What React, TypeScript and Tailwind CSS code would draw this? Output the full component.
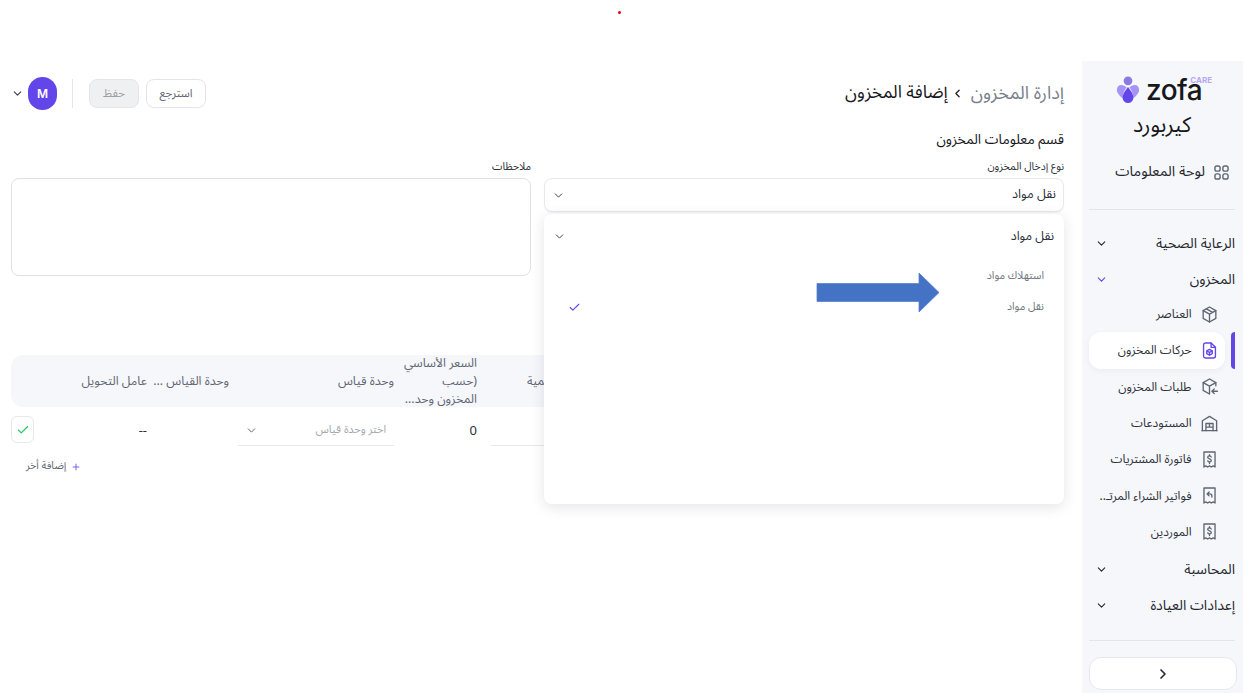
import { Check, ChevronDown, ChevronLeft, ChevronRight, Plus } from 'lucide-react'
import type { ReactNode } from 'react'

const stroke = { fill: 'none', stroke: 'currentColor', strokeWidth: 1.7, strokeLinecap: 'round', strokeLinejoin: 'round' } as const

function Icon({ children, className = 'text-[#5f6672]' }: { children: ReactNode; className?: string }) {
  return (
    <svg viewBox="0 0 24 24" className={`w-[19px] h-[19px] shrink-0 ${className}`} {...stroke}>
      {children}
    </svg>
  )
}

const BoxIcon = () => (
  <Icon>
    <path d="M12 2.5l8 4.5v10l-8 4.5-8-4.5V7z" />
    <path d="M4 7l8 4.5L20 7M12 11.5v10M8 4.8l8 4.5" />
  </Icon>
)
const FileBoxIcon = () => (
  <Icon className="text-[#6246ea]">
    <path d="M14 2.5H7a2.5 2.5 0 0 0-2.5 2.5v14A2.5 2.5 0 0 0 7 21.5h10a2.5 2.5 0 0 0 2.5-2.5V8z" />
    <path d="M14 2.5V8h5.5" />
    <path d="M12 10.5l3.5 2v3.5l-3.5 2-3.5-2v-3.5zM8.5 12.5l3.5 2 3.5-2M12 14.5V18" />
  </Icon>
)
const BoxReturnIcon = () => (
  <Icon>
    <path d="M20 11V7l-8-4.5L4 7v10l8 4.5" />
    <path d="M4 7l8 4.5L20 7M12 11.5V21" />
    <path d="M22 18h-6.5M18 15l-3 3 3 3" />
  </Icon>
)
const WarehouseIcon = () => (
  <Icon>
    <path d="M3 21V8.5L12 3l9 5.5V21" />
    <path d="M7.5 21v-9h9v9M7.5 16.5h9M12 12v4.5" />
    <path d="M2.5 21h19" />
  </Icon>
)
const ReceiptIcon = ({ back }: { back?: boolean }) => (
  <Icon>
    <path d="M5 2.5h14v19l-2.3-1.5-2.4 1.5-2.3-1.5-2.3 1.5L7.3 20 5 21.5z" />
    {back ? (
      <path d="M15 14v-1.5a2.5 2.5 0 0 0-2.5-2.5H9M11.5 7.5L9 10l2.5 2.5" />
    ) : (
      <path d="M14.2 8.8c-.4-.8-1.200-1.300-2.200-1.300-1.300 0-2.300.7-2.300 1.800s1 1.600 2.300 2 2.300.9 2.300 2-1 1.800-2.300 1.800c-1 0-1.800-.5-2.200-1.300M12 6v1.500M12 15.300v1.700" />
    )}
  </Icon>
)

const subItems = [
  { label: 'العناصر', icon: <BoxIcon /> },
  { label: 'حركات المخزون', icon: <FileBoxIcon />, active: true },
  { label: 'طلبات المخزون', icon: <BoxReturnIcon /> },
  { label: 'المستودعات', icon: <WarehouseIcon /> },
  { label: 'فاتورة المشتريات', icon: <ReceiptIcon /> },
  { label: 'فواتير الشراء المرتـ..', icon: <ReceiptIcon back /> },
  { label: 'الموردين', icon: <ReceiptIcon /> },
]

function GroupRow({ label, open }: { label: string; open?: boolean }) {
  return (
    <div className="h-[36.5px] flex items-center justify-between pl-[6px] text-[14px] text-[#24272e]">
      <span>{label}</span>
      <ChevronDown size={13} strokeWidth={2} className={open ? 'text-[#6246ea]' : 'text-[#24272e]'} />
    </div>
  )
}

function Sidebar() {
  return (
    <aside className="w-[161px] shrink-0 h-full bg-[#f6f7fb] pr-[8px] pl-[7px] flex flex-col">
      {/* Logo */}
      <div dir="ltr" className="h-[46px] pt-[15px] pl-[27px] flex items-start gap-[6px]">
        <svg viewBox="0 0 24 30" className="w-[24px] h-[29px] shrink-0">
          <circle cx="12" cy="5" r="4.5" fill="#8b7be0" />
          <path d="M10.5 12C8 8.5 1 7.5 0.5 14c-.3 4 4 7.5 6.5 9.5C6.5 19 8 15 10.5 12z" fill="#a594f5" />
          <path d="M13.5 12C16 8.500 23 7.500 23.500 14c.3 4-4 7.500-6.500 9.500C17.500 19 16 15 13.500 12z" fill="#a594f5" />
          <path d="M12 11.5c3 4 5.5 7 5.5 11a5.5 5.5 0 0 1-11 0c0-4 2.5-7 5.5-11z" fill="#6246ea" />
        </svg>
        <div className="relative font-['Inter',sans-serif] text-[28px] leading-[29px] font-medium tracking-[-0.5px] text-[#17171c]">
          zofa
          <span className="absolute -top-[1px] -right-[10px] text-[8px] leading-[10px] font-bold tracking-normal text-[#b4a8f5]">CARE</span>
        </div>
      </div>
      <div className="text-center text-[21.5px] leading-[30px] mt-[3px] text-[#17171c]">كيربورد</div>

      <div className="mt-[17px] h-[30px] flex items-center gap-[9px] pr-[6px] text-[14.4px] text-[#24272e]">
        <svg viewBox="0 0 16 16" className="w-[15px] h-[15px] text-[#5f6672]" fill="none" stroke="currentColor" strokeWidth="1.5">
          <rect x="1" y="1" width="5.5" height="5.5" rx="2" />
          <rect x="9.5" y="1" width="5.5" height="5.5" rx="2" />
          <rect x="1" y="9.5" width="5.5" height="5.5" rx="2" />
          <rect x="9.5" y="9.5" width="5.5" height="5.5" rx="2" />
        </svg>
        <span>لوحة المعلومات</span>
      </div>
      <div className="mt-[22px] mb-[15px] h-px bg-[#e3e5ea]" />

      <GroupRow label="الرعاية الصحية" />
      <GroupRow label="المخزون" open />

      <div className="-mt-[2px] flex flex-col">
        {subItems.map((item) => (
          <div key={item.label} className="h-[36.3px] flex items-center text-[12px] text-[#2c3038]">
            <div
              className={
                item.active
                  ? 'w-[4px] h-full shrink-0 rounded-l-md bg-[#6246ea] ml-[6px]'
                  : 'w-[4px] h-full shrink-0 ml-[6px]'
              }
            />
            <div
              className={`flex-1 min-w-0 h-full flex items-center gap-[8px] pr-[6.5px] rounded-xl ${
                item.active ? 'bg-white shadow-[0_2px_6px_rgba(30,35,60,0.05)]' : ''
              }`}
            >
              {item.icon}
              <span className="mt-[2px] whitespace-nowrap">{item.label}</span>
            </div>
          </div>
        ))}
      </div>

      <div className="mt-[1px]">
        <GroupRow label="المحاسبة" />
        <GroupRow label="إعدادات العيادة" />
      </div>

      <div className="mt-[16px] h-px bg-[#e3e5ea]" />
      <button className="mt-[16px] -mr-[2px] h-[33px] rounded-xl bg-white border border-[#e6e8ec] flex items-center justify-center text-[#24272e]">
        <ChevronRight size={16} strokeWidth={2.5} />
      </button>
    </aside>
  )
}

function Header() {
  return (
    <div className="h-[33px] flex items-center justify-between">
      <div className="flex items-center text-[18px]">
        <span className="text-[#7b808a]">إدارة المخزون</span>
        <ChevronLeft size={13} strokeWidth={2.5} className="mr-[7px] ml-[3px] text-[#24272e]" />
        <span className="text-[#17171c] text-[17.5px]">إضافة المخزون</span>
      </div>
      <div className="flex items-center">
        <button className="w-[60px] h-[29px] rounded-lg border border-[#e3e5ea] bg-white text-[11.5px] text-[#5f6672]">استرجع</button>
        <button className="w-[50px] h-[29px] mr-[7px] rounded-lg border border-[#e3e5ea] bg-[#eff0f2] text-[11.5px] text-[#9a9ea7]">حفظ</button>
        <div className="w-px h-[29px] bg-[#e3e5ea] mr-[16px] ml-[15px]" />
        <div className="w-[29px] h-[33px] rounded-full bg-[#6246ea] text-white text-[12px] font-semibold font-['Inter',sans-serif] flex items-center justify-center">M</div>
        <ChevronDown size={13} strokeWidth={2} className="mr-[4px] text-[#3a3e46]" />
      </div>
    </div>
  )
}

function EntryTypeField() {
  return (
    <div className="relative w-[520px] shrink-0 self-start z-10">
      <label className="block text-[10.5px] leading-[16px] mb-[3px] text-[#2c3038]">نوع إدخال المخزون</label>
      <div className="h-[34px] rounded-lg border border-[#e6e8ec] bg-white flex items-center justify-between px-[7px] text-[12.7px] text-[#2c3038] shadow-[0_1px_2px_rgba(30,35,60,0.06)]">
        <span>نقل مواد</span>
        <ChevronDown size={13} strokeWidth={1.8} className="text-[#3a3e46]" />
      </div>

      {/* Open dropdown */}
      <div className="absolute top-full right-0 left-0 mt-[2px] h-[290px] rounded-lg bg-white shadow-[0_3px_14px_rgba(30,35,60,0.12)] pt-[11px]">
        <div className="h-[22px] flex items-center justify-between pr-[10px] pl-[9px] text-[12.5px] text-[#2c3038]">
          <span>نقل مواد</span>
          <ChevronDown size={13} strokeWidth={1.8} className="text-[#3a3e46]" />
        </div>
        <div className="mt-[14px] flex flex-col text-[10.7px] text-[#6f747e]">
          <div className="h-[31px] flex items-center pr-[20px]">استهلاك مواد</div>
          <div className="h-[31px] flex items-center justify-between pr-[20px] pl-[24px]">
            <span>نقل مواد</span>
            <Check size={13} strokeWidth={2} className="text-[#6246ea]" />
          </div>
        </div>
        {/* Annotation arrow from the screenshot */}
        <svg viewBox="0 0 124 41" className="absolute left-[272px] top-[58px] w-[124px] h-[41px]">
          <path d="M1 11.5h102V1l20 19.5-20 19.5V29.5H1z" fill="#4472c4" stroke="#5b82cc" strokeWidth="0.8" />
        </svg>
      </div>
    </div>
  )
}

function ItemsTable() {
  return (
    <div className="mt-[79px]">
      <div className="h-[52px] rounded-xl bg-[#f6f7fb] flex items-center text-[12.3px] text-[#5f6672]">
        <div className="w-[507px] shrink-0" />
        <div className="w-[80px] shrink-0 whitespace-nowrap">الكمية</div>
        <div className="w-[83px] shrink-0 leading-[18px] whitespace-nowrap">
          السعر الأساسي
          <br />
          (حسب
          <br />
          المخزون وحد...
        </div>
        <div className="w-[165px] shrink-0">وحدة قياس</div>
        <div className="w-[82px] shrink-0 whitespace-nowrap">وحدة القياس ...</div>
        <div className="whitespace-nowrap">عامل التحويل</div>
      </div>
      <div className="h-[46px] flex items-center text-[13px] text-[#2c3038]">
        <div className="w-[507px] shrink-0" />
        <div className="w-[66px] ml-[14px] shrink-0 h-[36px] -mt-[4px] border-b border-[#e6e8ec]" />
        <div className="w-[83px] shrink-0 mt-[3px]">0</div>
        <div className="w-[156px] shrink-0 h-[36px] -mt-[4px] pt-[5px] ml-[9px] border-b border-[#e6e8ec] flex items-center justify-between pr-[8px] pl-[7px] text-[11px] text-[#a3a7af]">
          <span>اختر وحدة قياس</span>
          <ChevronDown size={13} strokeWidth={1.8} className="text-[#5f6672]" />
        </div>
        <div className="w-[82px] shrink-0" />
        <div className="w-[113px] shrink-0 mt-[3px]">--</div>
        <div className="w-[23px] h-[27px] -mt-[1px] rounded-md border border-[#e6e8ec] bg-white flex items-center justify-center">
          <Check size={14} strokeWidth={2} className="text-[#22c55e]" />
        </div>
      </div>
      <div className="mt-[6px] flex items-center justify-end pl-[15px] text-[10.5px] text-[#5f6672]">
        <div className="flex items-center gap-[5px]">
          <Plus size={10} strokeWidth={2} className="text-[#6246ea]" />
          <span>إضافة أخر</span>
        </div>
      </div>
    </div>
  )
}

export default function App() {
  return (
    <div
      dir="rtl"
      className="relative w-[1243px] h-[693px] overflow-hidden bg-white pt-[61px] font-['Noto_Sans_Arabic','Noto_Sans','DejaVu_Sans',sans-serif]"
    >
      <div className="absolute top-[11px] left-[618px] w-[3px] h-[3px] rounded-full bg-red-600" />
      <div className="h-full flex">
        <Sidebar />
        <main className="flex-1 min-w-0 pr-[18px] pl-[11px] pt-[16px]">
          <Header />
          <h2 className="mt-[18px] text-[13.8px] leading-[24px] text-[#17171c]">قسم معلومات المخزون</h2>
          <div className="mt-[7px] flex gap-[13px]">
            <EntryTypeField />
            <div className="flex-1 min-w-0">
              <label className="block text-[10.5px] leading-[16px] mb-[3px] text-[#2c3038]">ملاحظات</label>
              <div className="h-[98px] rounded-lg border border-[#dfe1e6] bg-white" />
            </div>
          </div>
          <ItemsTable />
        </main>
      </div>
    </div>
  )
}
